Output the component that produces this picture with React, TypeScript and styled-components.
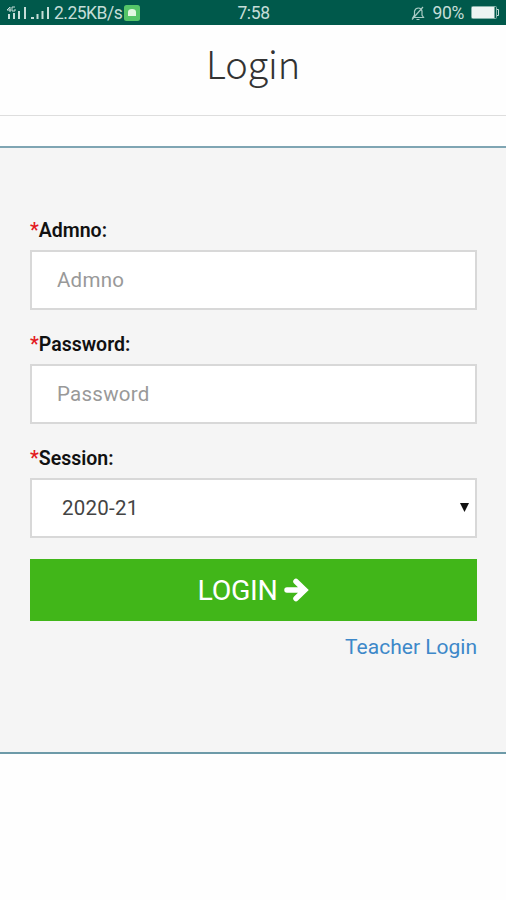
import React from "react";
import styled, { createGlobalStyle } from "styled-components";

const GlobalStyle = createGlobalStyle`
  * { box-sizing: border-box; }
  body { margin: 0; background: #fff; font-family: Roboto, "Liberation Sans", sans-serif; }
`;

const Screen = styled.main`
  width: 100%;
  height: 900px;
  overflow: hidden;
  background: #fefefe;
`;

const StatusBar = styled.div`
  display: grid;
  grid-template-columns: 1fr auto 1fr;
  align-items: center;
  height: 25px;
  padding: 1px 6px 0 7px;
  background: #00594b;
  color: #c5ddd8;
  font-size: 17.5px;
  line-height: 24px;
`;

const StatusGroup = styled.div<{ $end?: boolean }>`
  display: flex;
  align-items: center;
  justify-content: ${(p) => (p.$end ? "flex-end" : "flex-start")};
  gap: ${(p) => (p.$end ? "7px" : "2px")};
  svg { flex: none; }
`;

const Rate = styled.span`
  letter-spacing: -0.5px;
  margin-left: 2px;
`;

const Clock = styled.span`
  letter-spacing: -0.4px;
`;

const Percent = styled.span`
  letter-spacing: -0.3px;
`;

const Header = styled.header`
  display: flex;
  justify-content: center;
  height: 91px;
  border-bottom: 1px solid #dedede;
`;

const Title = styled.h1`
  margin: 0;
  font-family: "Noto Sans CJK SC", "Open Sans", sans-serif;
  font-size: 38px;
  font-weight: 200;
  line-height: 76px;
  letter-spacing: -0.2px;
  color: #333;
`;

const Panel = styled.form`
  display: flex;
  flex-direction: column;
  height: 608px;
  margin-top: 30px;
  padding: 62px 29px 0 30px;
  background: #f5f5f5;
  border-top: 2px solid #7fa5b3;
  border-bottom: 2px solid #6d9aa8;
`;

const Field = styled.div`
  height: 114px;
`;

const Label = styled.label`
  display: block;
  height: 40px;
  padding-top: 1px;
  font-size: 19.5px;
  font-weight: 600;
  line-height: 40px;
  color: #111;
`;

const Required = styled.span`
  color: #e31b23;
`;

const Control = styled.input`
  display: block;
  width: 100%;
  height: 60px;
  padding: 0 25px 1px;
  border: 2px solid #d8d8d8;
  border-radius: 0;
  outline: none;
  background: #fff;
  color: #444;
  font: 20.5px Roboto, sans-serif;
  letter-spacing: 0.25px;
  &::placeholder { color: #999; opacity: 1; }
`;

const SelectBox = styled.div`
  display: flex;
  align-items: center;
  justify-content: space-between;
  height: 60px;
  padding: 0 6px 1px 30px;
  border: 2px solid #d8d8d8;
  background: #fff;
  color: #444;
  font-size: 20.5px;
  letter-spacing: 0.25px;
`;

const Submit = styled.button`
  display: flex;
  align-items: center;
  justify-content: center;
  gap: 7px;
  height: 62px;
  margin: 7px 0 0;
  padding: 0;
  border: 0;
  background: #41b619;
  color: #fff;
  font: 28.5px Roboto, sans-serif;
  letter-spacing: -0.35px;
`;

const TeacherLink = styled.a`
  align-self: flex-end;
  margin-top: 14px;
  color: #3d88c9;
  font-size: 21px;
  line-height: 25px;
  text-decoration: none;
`;

const Signals = () => (
  <svg width="43" height="14" viewBox="0 0 43 14" fill="#c5ddd8">
    <path d="M0 4 3 1v5M0 4h4M8 1H5v4h3V3" fill="none" stroke="#c5ddd8" strokeWidth="1" />
    <path d="M1 8h2v5H1zM6 7h2v6H6zM11 5h2v8h-2zM17 1h2v12h-2zM24 11h3v2h-3zM29.500 8h2v5h-2zM34.500 5h2v8h-2zM40 1h2v12h-2z" />
  </svg>
);

const AppBadge = () => (
  <svg width="16" height="16" viewBox="0 0 16 16">
    <rect width="16" height="16" rx="2.500" fill="#55c568" />
    <path d="M4 11V7q0-3 4-3t4 3v4z" fill="#e3f8e3" />
  </svg>
);

const MutedBell = () => (
  <svg width="14" height="15" viewBox="0 0 14 15" fill="none" stroke="#a9cbc4" strokeWidth="1.200">
    <path d="M2 11.500h10.500L11 9V5Q10.500 2 7.500 2T3.500 5v4zM5.500 13.500h3M1 13.500 12 1" />
  </svg>
);

const Battery = () => (
  <svg width="29" height="14" viewBox="0 0 29 14">
    <rect x="0.500" y="0.500" width="25" height="12" rx="1" fill="none" stroke="#86b3aa" />
    <path d="M1 1h22.500v11H1z" fill="#edf4f2" />
    <path d="M26 3.500h1.500v6H26" fill="none" stroke="#c5ddd8" />
  </svg>
);

const Arrow = () => (
  <svg width="25" height="26" viewBox="0 0 25 26" fill="none" stroke="#fff" strokeWidth="5.500">
    <path d="M3 13h16M12 4.500 20.800 13 12 21.500" strokeLinecap="round" strokeLinejoin="miter" />
  </svg>
);

const Caret = () => (
  <svg width="9" height="9" viewBox="0 0 9 9">
    <path d="M0 0h9L4.500 9z" fill="#111" />
  </svg>
);

export default function App() {
  return (
    <Screen>
      <GlobalStyle />
      <StatusBar>
        <StatusGroup>
          <Signals />
          <Rate>2.25KB/s</Rate>
          <AppBadge />
        </StatusGroup>
        <Clock>7:58</Clock>
        <StatusGroup $end>
          <MutedBell />
          <Percent>90%</Percent>
          <Battery />
        </StatusGroup>
      </StatusBar>
      <Header>
        <Title>Login</Title>
      </Header>
      <Panel onSubmit={(e) => e.preventDefault()}>
        <Field>
          <Label htmlFor="admno"><Required>*</Required>Admno:</Label>
          <Control id="admno" placeholder="Admno" />
        </Field>
        <Field>
          <Label htmlFor="password"><Required>*</Required>Password:</Label>
          <Control id="password" type="password" placeholder="Password" />
        </Field>
        <Field>
          <Label as="div"><Required>*</Required>Session:</Label>
          <SelectBox>
            <span>2020-21</span>
            <Caret />
          </SelectBox>
        </Field>
        <Submit type="submit">
          <span>LOGIN</span>
          <Arrow />
        </Submit>
        <TeacherLink href="#">Teacher Login</TeacherLink>
      </Panel>
    </Screen>
  );
}
